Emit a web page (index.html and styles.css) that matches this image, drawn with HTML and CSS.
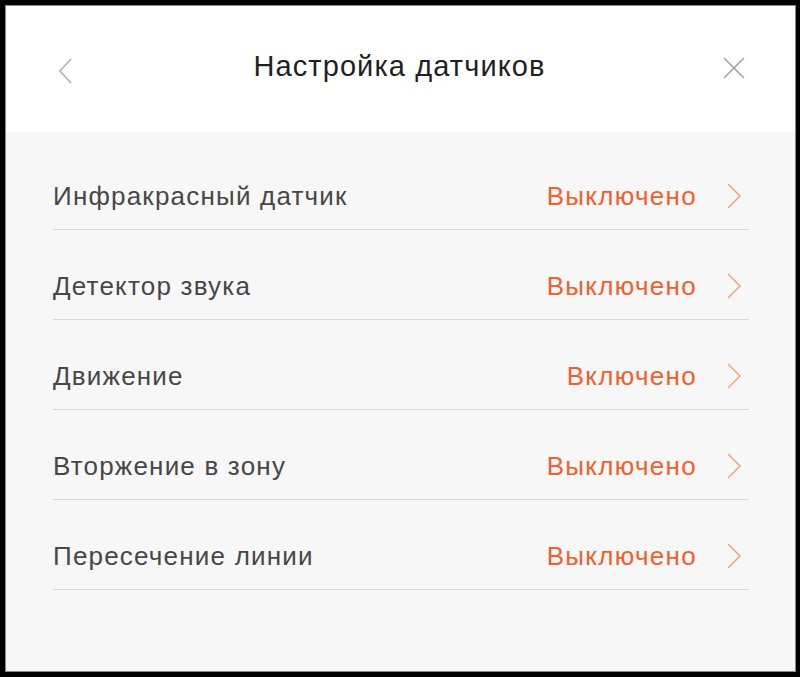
FILE: index.html
```html
<!DOCTYPE html>
<html lang="ru">
<head>
<meta charset="utf-8">
<title>Настройка датчиков</title>
<link rel="stylesheet" href="styles.css">
</head>
<body>
<div class="app">
  <header class="header">
    <button class="icon-btn back" aria-label="Назад">
      <svg width="14" height="26" viewBox="0 0 14 26"><path d="M13 1 L2 13 L13 25" fill="none" stroke="#b3b3b3" stroke-width="1.6"/></svg>
    </button>
    <h1 class="title">Настройка датчиков</h1>
    <button class="icon-btn close" aria-label="Закрыть">
      <svg width="22" height="22" viewBox="0 0 22 22"><path d="M1 1 L21 21 M21 1 L1 21" fill="none" stroke="#a0a0a0" stroke-width="1.6"/></svg>
    </button>
  </header>
  <main class="list">
    <div class="row"><span class="label">Инфракрасный датчик</span><span class="value">Выключено</span><span class="chev"><svg width="16" height="26" viewBox="0 0 16 26"><path d="M2 1 L14 13 L2 25" fill="none" stroke="#f5a688" stroke-width="1.6"/></svg></span></div>
    <div class="row"><span class="label">Детектор звука</span><span class="value">Выключено</span><span class="chev"><svg width="16" height="26" viewBox="0 0 16 26"><path d="M2 1 L14 13 L2 25" fill="none" stroke="#f5a688" stroke-width="1.6"/></svg></span></div>
    <div class="row"><span class="label">Движение</span><span class="value">Включено</span><span class="chev"><svg width="16" height="26" viewBox="0 0 16 26"><path d="M2 1 L14 13 L2 25" fill="none" stroke="#f5a688" stroke-width="1.6"/></svg></span></div>
    <div class="row"><span class="label">Вторжение в зону</span><span class="value">Выключено</span><span class="chev"><svg width="16" height="26" viewBox="0 0 16 26"><path d="M2 1 L14 13 L2 25" fill="none" stroke="#f5a688" stroke-width="1.6"/></svg></span></div>
    <div class="row"><span class="label">Пересечение линии</span><span class="value">Выключено</span><span class="chev"><svg width="16" height="26" viewBox="0 0 16 26"><path d="M2 1 L14 13 L2 25" fill="none" stroke="#f5a688" stroke-width="1.6"/></svg></span></div>
  </main>
</div>
</body>
</html>
```

FILE: styles.css
```css
* { box-sizing: border-box; }
html, body { margin: 0; padding: 0; background: #000; }
body { font-family: "Liberation Sans", Arial, "Helvetica Neue", sans-serif; }
.app {
  margin: 5px 4px 5px 5px;
  width: 791px;
  height: 667px;
  border: 1px solid #8a8a8a;
  background: #f7f7f7;
  display: flex;
  flex-direction: column;
}
.header {
  height: 126px;
  background: #fff;
  display: flex;
  align-items: center;
  justify-content: space-between;
  padding: 0 48px 0 46px;
}
.icon-btn {
  background: none;
  border: 0;
  padding: 0;
  display: flex;
  align-items: center;
  justify-content: center;
  width: 26px;
}
.back { margin-top: 4px; }
.close { margin-bottom: 3px; }
.title {
  margin: 0 0 7px;
  font-size: 29px;
  font-weight: normal;
  letter-spacing: 1.1px;
  color: #1f1f1f;
  line-height: 32px;
}
.list {
  padding: 8px 46px 0 47px;
}
.row {
  height: 90px;
  border-bottom: 1.5px solid #d6d6d6;
  display: flex;
  align-items: flex-end;
  padding-bottom: 20px;
}
.label {
  flex: 1;
  font-size: 26px;
  letter-spacing: 1.2px;
  line-height: 26px;
  color: #474747;
}
.value {
  font-size: 26px;
  letter-spacing: 1.3px;
  line-height: 26px;
  color: #f0602e;
}
.chev {
  display: flex;
  margin-left: 29px;
  margin-right: 7px;
}
```
